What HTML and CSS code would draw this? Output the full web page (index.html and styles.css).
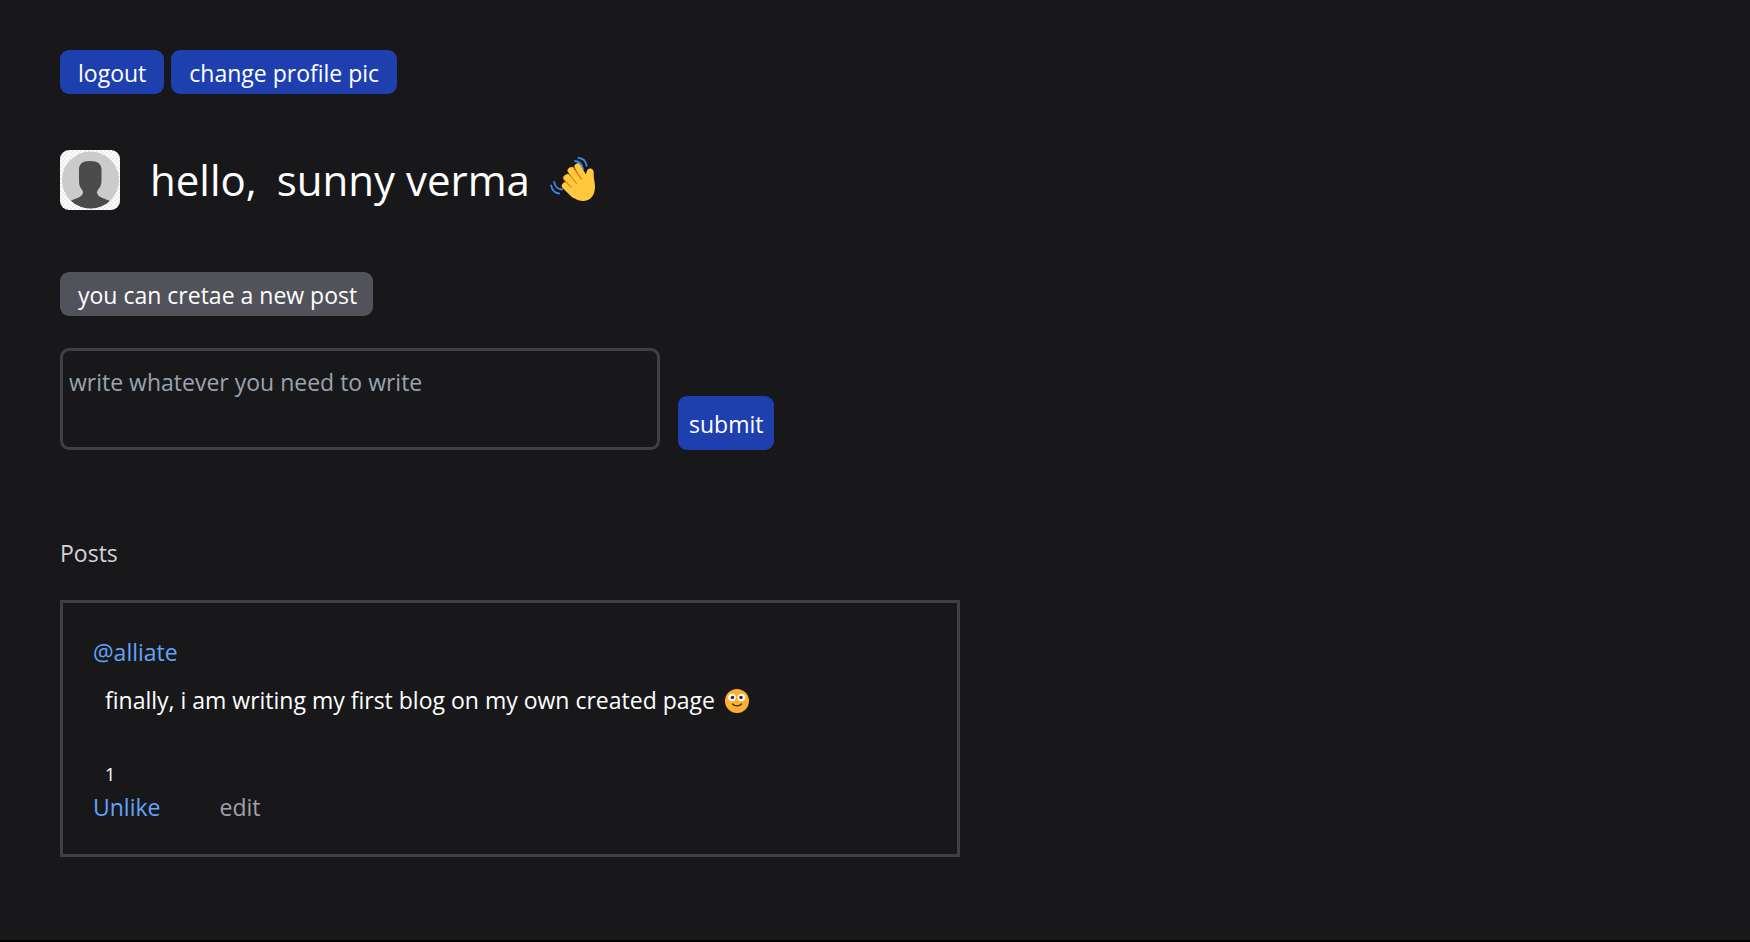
FILE: index.html
```html
<!DOCTYPE html>
<html lang="en">
<head>
<meta charset="utf-8">
<meta name="viewport" content="width=device-width, initial-scale=1">
<title>Profile</title>
<link rel="stylesheet" href="styles.css">
</head>
<body>
<main class="page">
  <nav class="actions">
    <a class="button" href="#logout">logout</a>
    <a class="button" href="#upload">change profile pic</a>
  </nav>

  <header class="greeting">
    <svg class="avatar" viewBox="0 0 60 60" role="img" aria-label="Profile picture">
      <defs>
        <pattern id="checks" width="4" height="4" patternUnits="userSpaceOnUse">
          <rect width="4" height="4" fill="#fff"/>
          <path d="M0 0h2v2H0zM2 2h2v2H2z" fill="#ededed"/>
        </pattern>
        <clipPath id="disc"><circle cx="30.5" cy="30" r="28.500"/></clipPath>
      </defs>
      <rect width="60" height="60" fill="url(#checks)"/>
      <circle cx="30.5" cy="30" r="28.5" fill="#cbcbcb"/>
      <path clip-path="url(#disc)" fill="#4b4b4b" d="M19 20C19 14 22 11 30 11s11.500 3 11.500 9v11c0 4-1.500 6-3 8-1.300 2-1.500 2.500-1.500 4 1 4 6 5 13 8v12H10V51c7-3 12-4 13-8 0-1.500 0-2-1.500-4-1.500-2-2.500-4-2.500-8z"/>
    </svg>
    <h1 class="title"><span>hello,</span><span>sunny verma</span></h1>
    <svg class="wave" viewBox="0 0 48 48" role="img" aria-label="waving hand">
      <g fill="none" stroke="#4285e8" stroke-width="1.800" stroke-linecap="round">
        <path d="M25 5c4.500.5 7 3.500 8 8M28.500 1.800c4.500.5 7.500 3.500 8.200 8M4.200 26c.5 4 3.500 7 8 7.500M1.200 29.500c.5 4.500 4 8 8 8"/>
      </g>
      <g fill="none" stroke="#d88d16" stroke-width="6" stroke-linecap="round">
        <path d="M28 11 36 24M20.500 14.500 31 28M16 22 26 33"/>
      </g>
      <g fill="none" stroke="#ffc83d" stroke-width="6" stroke-linecap="round">
        <path d="M27.500 10.500 36 25"/>
        <path d="M22 14 33 29" stroke="#d88d16"/>
        <path d="M21 14.500 32 31"/>
        <path d="M18 21 27 32" stroke="#d88d16"/>
        <path d="M17 21.500 28 35"/>
        <path d="M15.500 29 22 35" stroke="#d88d16"/>
        <path d="M14.800 29.800 24 39"/>
      </g>
      <path fill="#ffc83d" d="M26 29c2-3 6-7 9-7l1.500-6c.8-2.500 2-3.800 4-3.500 2.500.3 3.500 2.500 3.200 5-.4 4 1.300 8 1.300 13C45 40 40 45 33 45c-6 0-11-3.500-17-11z"/>
    </svg>
  </header>

  <form class="composer" action="#" method="post">
    <label class="prompt" for="content">you can cretae a new post</label>
    <div class="entry">
      <textarea class="content" id="content" name="content" placeholder="write whatever you need to write"></textarea>
      <button class="submit" type="submit">submit</button>
    </div>
  </form>

  <section class="posts">
    <h2 class="posts-title">Posts</h2>
    <article class="post">
      <a class="author" href="#alliate">@alliate</a>
      <p class="text">finally, i am writing my first blog on my own created page
        <svg class="smile" viewBox="0 0 24 24" role="img" aria-label="smiling face">
          <circle cx="12" cy="12" r="12" fill="#ffb02e"/>
          <circle cx="7" cy="8.5" r="3.800" fill="#fff"/>
          <circle cx="16.5" cy="8.5" r="3.800" fill="#fff"/>
          <circle cx="7.5" cy="8.5" r="1.800" fill="#402a32"/>
          <circle cx="16" cy="8.5" r="1.800" fill="#402a32"/>
          <path d="M7.500 15c2 2.500 7 2.500 9 0" fill="none" stroke="#402a32" stroke-width="1.300" stroke-linecap="round"/>
        </svg>
      </p>
      <p class="likes">1</p>
      <div class="links">
        <a class="like" href="#like">Unlike</a>
        <a class="edit" href="#edit">edit</a>
      </div>
    </article>
  </section>
</main>
</body>
</html>
```

FILE: styles.css
```css
* {
  box-sizing: border-box;
  margin: 0;
}

body {
  min-height: 100vh;
  background: #18181b;
  border-bottom: 2px solid #000;
  color: #fff;
  font-family: "Segoe UI", "Open Sans", "Noto Sans", sans-serif;
  font-size: 23px;
  line-height: 36px;
}

a {
  text-decoration: none;
}

.page {
  padding: 50px 60px;
}

.actions {
  display: flex;
  gap: 7px;
}

.button {
  padding: 5px 18px 3px;
  border-radius: 9px;
  background: #1e40af;
  color: #fff;
}

.greeting {
  display: flex;
  align-items: center;
  margin-top: 56px;
}

.avatar {
  width: 60px;
  height: 60px;
  border-radius: 9px;
}

.title {
  display: flex;
  gap: 20px;
  margin-left: 30px;
  font-size: 42px;
  font-weight: 400;
  line-height: 60px;
}

.wave {
  width: 48px;
  height: 48px;
  margin-left: 20px;
}

.composer {
  margin-top: 62px;
}

.prompt {
  display: inline-block;
  padding: 5px 16px 3px 18px;
  border-radius: 9px;
  background: #52525b;
}

.entry {
  display: flex;
  align-items: flex-end;
  gap: 18px;
  margin-top: 32px;
}

.content {
  width: 600px;
  height: 102px;
  padding: 13px 6px;
  border: 3px solid #3f3f46;
  border-radius: 9px;
  background: transparent;
  color: #fff;
  font: inherit;
  resize: none;
}

.content::placeholder {
  color: #9ca3af;
}

.submit {
  padding: 10px 11px 8px;
  border: 0;
  border-radius: 9px;
  background: #1e40af;
  color: #fff;
  font: inherit;
}

.posts {
  margin-top: 85px;
}

.posts-title {
  color: #d4d4d8;
  font-size: 23px;
  font-weight: 400;
}

.post {
  max-width: 900px;
  margin-top: 29px;
  padding: 31px 30px 29px;
  border: 3px solid #3f3f46;
}

.author,
.like {
  color: #60a5fa;
}

.text {
  margin-top: 12px;
  padding-left: 12px;
}

.smile {
  width: 24px;
  height: 24px;
  margin-left: 4px;
  vertical-align: -4px;
}

.likes {
  margin-top: 41px;
  padding-left: 12px;
  font-size: 18px;
  line-height: 30px;
}

.links {
  display: flex;
  gap: 59px;
}

.edit {
  color: #a1a1aa;
}
```
